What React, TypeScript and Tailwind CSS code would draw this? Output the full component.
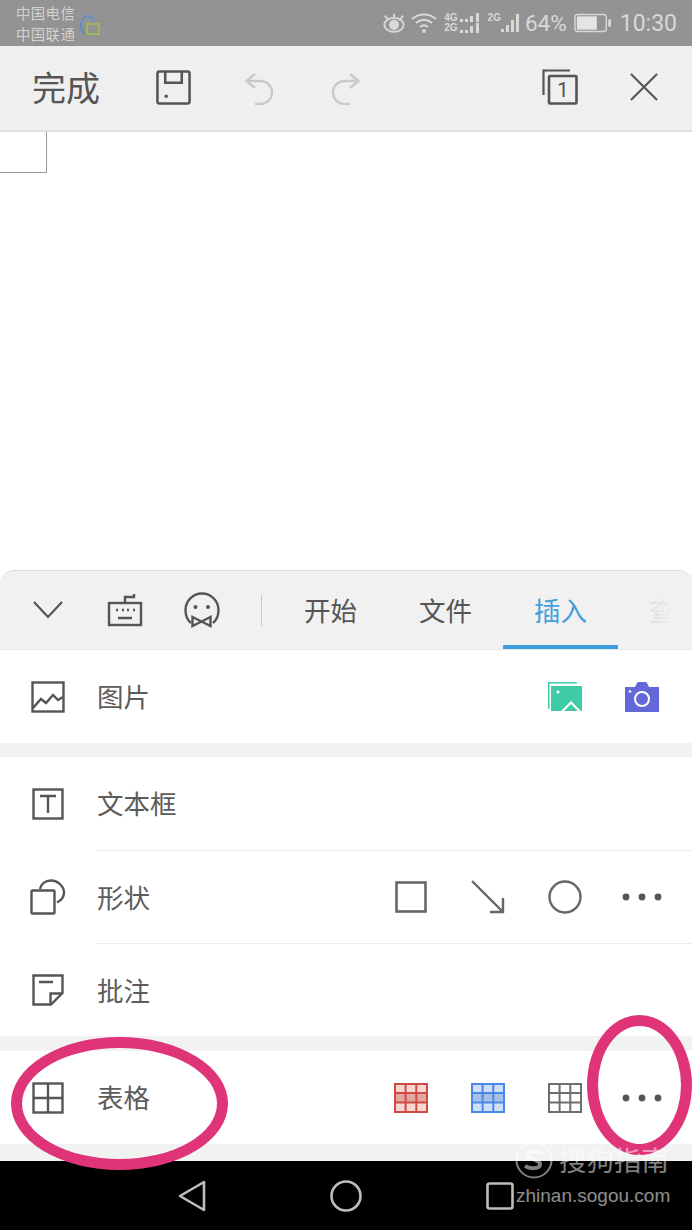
import React from "react";

const cjk = { fontFamily: '"Noto Sans CJK SC", "Noto Sans", sans-serif' };

function Dots() {
  return (
    <svg width="40" height="10" viewBox="0 0 40 10">
      <circle cx="4" cy="5" r="3.4" fill="#555" />
      <circle cx="20" cy="5" r="3.4" fill="#555" />
      <circle cx="36" cy="5" r="3.4" fill="#555" />
    </svg>
  );
}

function Grid({ stroke, fill, mid }: { stroke: string; fill: string; mid: string }) {
  return (
    <svg width="34" height="30" viewBox="0 0 34 30">
      <rect x="1" y="1" width="32" height="28" rx="1" fill={fill} />
      <rect x="1" y="10" width="32" height="9.5" fill={mid} />
      <path d="M1 1h32v28H1zM1 10h32M1 19.5h32M11.6 1v28M22.3 1v28" fill="none" stroke={stroke} strokeWidth="2" />
    </svg>
  );
}

function Undo() {
  return (
    <svg width="30" height="32" viewBox="0 0 30 32" fill="none" stroke="#c9c9c9" strokeWidth="2.4">
      <path d="M11 1L2.500 8 11 15" />
      <path d="M3 8h13c7 0 12 5 12 11.500S23 31 16 31h-5" />
    </svg>
  );
}

function Row({ icon, label, children }: { icon: React.ReactNode; label: string; children?: React.ReactNode }) {
  return (
    <div className="flex h-full items-center bg-white">
      <div className="ml-4 flex w-16 shrink-0 items-center justify-center">{icon}</div>
      <span className="ml-[17px] text-[26.5px] leading-none text-[#5c5c5c]">{label}</span>
      <div className="ml-auto flex items-center pr-3">{children}</div>
    </div>
  );
}

function Slot({ children }: { children: React.ReactNode }) {
  return <div className="flex w-[77px] shrink-0 items-center justify-center">{children}</div>;
}

export default function App() {
  return (
    <div className="relative flex h-[1230px] w-[692px] flex-col overflow-hidden bg-white" style={cjk}>
      {/* status bar */}
      <div className="flex h-[46px] shrink-0 items-center bg-[#939393] pl-4 pr-[15px]">
        <div className="flex flex-col text-[14.5px] leading-[21px] tracking-[0.3px] text-[#d2d2d2]">
          <span>中国电信</span>
          <span>中国联通</span>
        </div>
        <svg className="ml-[4px] mt-[5px]" width="22" height="26" viewBox="0 0 22 26" fill="none">
          <path d="M6 21C1 17 1 13 3 8c1-3 3-5 6-5s5 2 6 6" stroke="#5f8fc9" strokeWidth="2" />
          <rect x="8" y="11" width="12" height="10" stroke="#a3bd4e" strokeWidth="1.6" />
        </svg>
        <div className="ml-auto flex items-center">
          <svg width="24" height="22" viewBox="0 0 26 22" fill="none" stroke="#d8d8d8" strokeWidth="2">
            <ellipse cx="13" cy="13" rx="10.5" ry="7.5" />
            <circle cx="13" cy="13" r="4.5" fill="#d8d8d8" />
            <path d="M3 3l4 5M23 3l-4 5M13 1v4" />
          </svg>
          <svg className="ml-[5px]" width="26" height="22" viewBox="0 0 26 22" fill="none" stroke="#d8d8d8" strokeWidth="2">
            <path d="M1 7c7-6 17-6 24 0M5 11c5-4 11-4 16 0M9 15c2.500-2 5.500-2 8 0" />
            <circle cx="13" cy="19" r="2" fill="#d8d8d8" stroke="none" />
          </svg>
          <div className="ml-[7px] flex flex-col text-[10px] font-bold leading-[10px] text-[#d8d8d8]" style={{ fontFamily: '"Liberation Sans", sans-serif' }}>
            <span>4G</span>
            <span>2G</span>
          </div>
          <svg className="ml-[1px]" width="22" height="24" viewBox="0 0 22 24" fill="#d8d8d8">
            <path d="M1 8h3v3H1zM6 8h3v3H6zM11 5h3v6h-3zM17 2h3v9h-3zM1 19h3v3H1zM6 19h3v3H6zM11 15h3v7h-3zM17 12h3v10h-3z" />
          </svg>
          <span className="ml-[7px] self-start pt-[2px] text-[10px] font-bold leading-[10px] text-[#d8d8d8]" style={{ fontFamily: '"Liberation Sans", sans-serif' }}>2G</span>
          <svg width="22" height="24" viewBox="0 0 22 24" fill="#d8d8d8" className="-ml-[2px]">
            <path d="M2 18h3v3H2zM7 14h3v7H7zM12 9h3v12h-3zM17 3h3v18h-3z" />
          </svg>
          <span className="ml-[4px] text-[22.5px] leading-none text-[#d8d8d8]" style={{ fontFamily: "Roboto, sans-serif" }}>64%</span>
          <svg className="ml-[7px]" width="38" height="20" viewBox="0 0 40 20" fill="none">
            <rect x="1" y="1" width="33" height="18" rx="3" stroke="#d8d8d8" strokeWidth="1.500" />
            <rect x="3" y="3" width="21" height="14" fill="#e4e4e4" />
            <rect x="36" y="6" width="3" height="8" rx="1" fill="#d8d8d8" />
          </svg>
          <span className="ml-[8px] text-[23px] leading-none text-[#d8d8d8]" style={{ fontFamily: "Roboto, sans-serif" }}>10:30</span>
        </div>
      </div>

      {/* toolbar */}
      <div className="flex h-[86px] shrink-0 items-center border-b-2 border-[#e0e0e0] bg-[#efefef] pb-[2px]">
        <span className="ml-8 text-[34px] leading-none text-[#555]">完成</span>
        <svg className="ml-[56px]" width="35" height="35" viewBox="0 0 36 36" fill="none" stroke="#555" strokeWidth="2.600">
          <rect x="1.500" y="1.500" width="33" height="33" rx="2" />
          <path d="M9.500 2v11h17V2" />
          <circle cx="10.500" cy="27" r="1.800" fill="#555" stroke="none" />
        </svg>
        <div className="ml-[53px] mt-[4px]">
          <Undo />
        </div>
        <div className="ml-[57px] mt-[4px] -scale-x-100">
          <Undo />
        </div>
        <div className="relative ml-auto mr-[52px]">
          <svg width="36" height="36" viewBox="0 0 36 36" fill="none" stroke="#555">
            <path d="M1.500 26V1.500H28" strokeWidth="2.200" />
            <rect x="7" y="7" width="27.500" height="27.500" rx="1" strokeWidth="2.600" />
          </svg>
          <span className="absolute left-[15px] top-[9px] text-[21px] leading-[24px] text-[#555]" style={{ fontFamily: "Roboto, sans-serif" }}>1</span>
        </div>
        <svg className="mr-[34px]" width="28" height="28" viewBox="0 0 30 30" fill="none" stroke="#555" strokeWidth="2.200">
          <path d="M1 1l28 28M29 1L1 29" />
        </svg>
      </div>

      {/* document */}
      <div className="h-[438px] shrink-0 bg-white">
        <div className="h-[41px] w-[47px] border-b border-r border-[#9a9a9a]" />
      </div>

      {/* panel */}
      <div className="flex min-h-0 flex-1 flex-col rounded-t-[14px] border-t border-[#dcdcdc] bg-[#f2f2f2]">
        <div className="flex h-[79px] shrink-0 items-center overflow-hidden rounded-t-[14px] border-b border-[#e6e6e6] bg-[#f1f1f1] pl-[9px]">
          <Slot>
            <svg width="30" height="18" viewBox="0 0 30 18" fill="none" stroke="#555" strokeWidth="2.200">
              <path d="M1 1l14 15L29 1" />
            </svg>
          </Slot>
          <Slot>
            <svg width="36" height="34" viewBox="0 0 36 34" fill="none" stroke="#555" strokeWidth="2.400">
              <rect x="2" y="10" width="32" height="22" />
              <path d="M18 10V4h9V1M11 25h14" />
              <path d="M9 17h2M15 17h2M20 17h2M26 17h2" />
            </svg>
          </Slot>
          <Slot>
            <svg width="36" height="36" viewBox="0 0 36 36" fill="none" stroke="#555" strokeWidth="2.400">
              <path d="M7 31C3 28 1.500 23 1.500 18a16.500 16.500 0 0 1 33 0c0 5-2 10-5.500 13" />
              <circle cx="11.500" cy="15" r="2" fill="#555" stroke="none" />
              <circle cx="24" cy="15" r="2" fill="#555" stroke="none" />
              <path d="M8.500 25l9 4.500 9-4.500v9l-9-4.500-9 4.500z" />
            </svg>
          </Slot>
          <div className="ml-[21px] h-[31px] w-px shrink-0 bg-[#c9c9c9]" />
          <div className="ml-[11px] flex h-full shrink-0">
            {["开始", "文件", "插入", "查看"].map((t, i) => (
              <div
                key={t}
                className={
                  i === 2
                    ? "flex h-full w-[115px] items-center justify-center border-b-[4px] border-[#3b9fdf] pt-[4px] text-[26.5px] text-[#459fd8]"
                    : i === 3
                    ? "flex h-full w-[115px] items-center justify-center text-[26.5px] text-[#dedede]"
                    : "flex h-full w-[115px] items-center justify-center text-[26.5px] text-[#555]"
                }
              >
                {t}
              </div>
            ))}
          </div>
        </div>

        <div className="h-[93px] shrink-0">
          <Row
            label="图片"
            icon={
              <svg width="34" height="32" viewBox="0 0 34 32" fill="none" stroke="#555" strokeWidth="2.400">
                <rect x="1.500" y="1.500" width="31" height="29" />
                <path d="M2 27l8-9 5 4 7-8 5 5 5-3" />
              </svg>
            }
          >
            <Slot>
              <svg width="34" height="30" viewBox="0 0 34 30">
                <path d="M0 0h29v1.500H1.500V27H0z" fill="#3ecba6" />
                <rect x="3" y="4" width="31" height="25" fill="#3ecba6" />
                <circle cx="10" cy="10" r="1.500" fill="#fff" />
                <path d="M13 29l10-10 10 10h-3l-7-7-7 7z" fill="#fff" />
              </svg>
            </Slot>
            <Slot>
              <svg width="34" height="30" viewBox="0 0 34 30">
                <path d="M0 5h10l2-4q.5-1 2-1h6q1.500 0 2 1l2 4h10v25H0z" fill="#6468d6" />
                <circle cx="17" cy="17" r="7" fill="none" stroke="#fff" strokeWidth="2" />
                <circle cx="5" cy="9.500" r="1.300" fill="#fff" />
              </svg>
            </Slot>
          </Row>
        </div>

        <div className="mt-[14px] flex h-[279px] shrink-0 flex-col bg-white">
          <div className="h-[93px]">
            <Row
              label="文本框"
              icon={
                <svg width="32" height="32" viewBox="0 0 32 32" fill="none" stroke="#555" strokeWidth="2.400">
                  <rect x="1.500" y="1.500" width="29" height="29" />
                  <path d="M8 8h16M16 8v17" />
                </svg>
              }
            />
          </div>
          <div className="ml-24 h-px bg-[#ececec]" />
          <div className="h-[92px]">
            <Row
              label="形状"
              icon={
                <svg width="36" height="36" viewBox="0 0 36 36" fill="none" stroke="#555" strokeWidth="2.400">
                  <rect x="1.500" y="11.500" width="23" height="23" rx="1" />
                  <path d="M10 10C11 5 15 1.500 21 1.500c7 0 13 6 13 12 0 5-3 8-7 10" />
                </svg>
              }
            >
              <Slot>
                <svg width="32" height="32" viewBox="0 0 32 32" fill="none" stroke="#666" strokeWidth="2.600">
                  <rect x="1.500" y="1.500" width="29" height="29" />
                </svg>
              </Slot>
              <Slot>
                <svg width="34" height="34" viewBox="0 0 34 34" fill="none" stroke="#666" strokeWidth="2.400">
                  <path d="M1 1l31 31M32 18v14H19" />
                </svg>
              </Slot>
              <Slot>
                <svg width="34" height="34" viewBox="0 0 34 34" fill="none" stroke="#666" strokeWidth="2.400">
                  <circle cx="17" cy="17" r="15.500" />
                </svg>
              </Slot>
              <Slot>
                <Dots />
              </Slot>
            </Row>
          </div>
          <div className="ml-24 h-px bg-[#ececec]" />
          <div className="h-[92px]">
            <Row
              label="批注"
              icon={
                <svg width="32" height="32" viewBox="0 0 32 32" fill="none" stroke="#555" strokeWidth="2.400">
                  <path d="M19 30.500H1.500v-29h29V19z" />
                  <path d="M7 8h14M18.500 30V19.500H30" />
                </svg>
              }
            />
          </div>
        </div>

        <div className="mt-[15px] h-[93px] shrink-0">
          <Row
            label="表格"
            icon={
              <svg width="32" height="32" viewBox="0 0 32 32" fill="none" stroke="#555" strokeWidth="2.400">
                <rect x="1.500" y="1.500" width="29" height="29" />
                <path d="M1.500 16h29M16 1.500v29" />
              </svg>
            }
          >
            <Slot>
              <Grid stroke="#cf4a45" fill="#f8d6d2" mid="#e3a7a3" />
            </Slot>
            <Slot>
              <Grid stroke="#4a87e8" fill="#cfdff8" mid="#a8bfe6" />
            </Slot>
            <Slot>
              <Grid stroke="#6e6e6e" fill="#ffffff" mid="#ffffff" />
            </Slot>
            <Slot>
              <Dots />
            </Slot>
          </Row>
        </div>

        <div className="h-[17px] shrink-0 bg-[#f2f2f2]" />

        {/* nav bar */}
        <div className="flex min-h-0 flex-1 items-center bg-black">
          <div className="flex w-full items-center justify-between px-[178px]">
            <svg width="28" height="32" viewBox="0 0 28 32" fill="none" stroke="#bdbdbd" strokeWidth="2.600" strokeLinejoin="round">
              <path d="M26 2v28L2 16z" />
            </svg>
            <svg width="32" height="32" viewBox="0 0 32 32" fill="none" stroke="#bdbdbd" strokeWidth="2.600">
              <circle cx="16" cy="16" r="14.500" />
            </svg>
            <svg width="28" height="28" viewBox="0 0 28 28" fill="none" stroke="#bdbdbd" strokeWidth="2.600">
              <rect x="1.500" y="1.500" width="25" height="25" rx="2" />
            </svg>
          </div>
        </div>
      </div>

      {/* fade over the clipped tab */}
      <div className="pointer-events-none absolute left-[650px] top-[575px] h-[70px] w-[42px] bg-gradient-to-r from-transparent to-[#f1f1f1] to-60%" />

      {/* hand-drawn annotations */}
      <div className="pointer-events-none absolute left-[11px] top-[1037px] h-[133px] w-[217px] rounded-[50%] border-[11px] border-[#df3478]" />
      <div className="pointer-events-none absolute left-[587px] top-[1015px] h-[140px] w-[105px] rounded-[50%] border-[11px] border-[#df3478]" />

      {/* watermark */}
      <div className="pointer-events-none absolute left-[515px] top-[1141px] flex items-center">
        <svg width="38" height="38" viewBox="0 0 38 38" fill="none" stroke="#ffffff" strokeOpacity="0.5" strokeWidth="2">
          <circle cx="19" cy="19" r="17.500" />
          <path d="M27 12c-3-2-12-3-14 1-2 5 13 5 12 11-1 4-10 4-15 1" strokeWidth="4" />
        </svg>
        <span className="ml-[6px] text-[27.5px] leading-none text-white/50">搜狗指南</span>
      </div>
      <div className="pointer-events-none absolute left-[516px] top-[1184px] text-[19px] leading-[24px] text-white/55" style={{ fontFamily: '"Liberation Sans", sans-serif' }}>
        zhinan.sogou.com
      </div>
    </div>
  );
}
